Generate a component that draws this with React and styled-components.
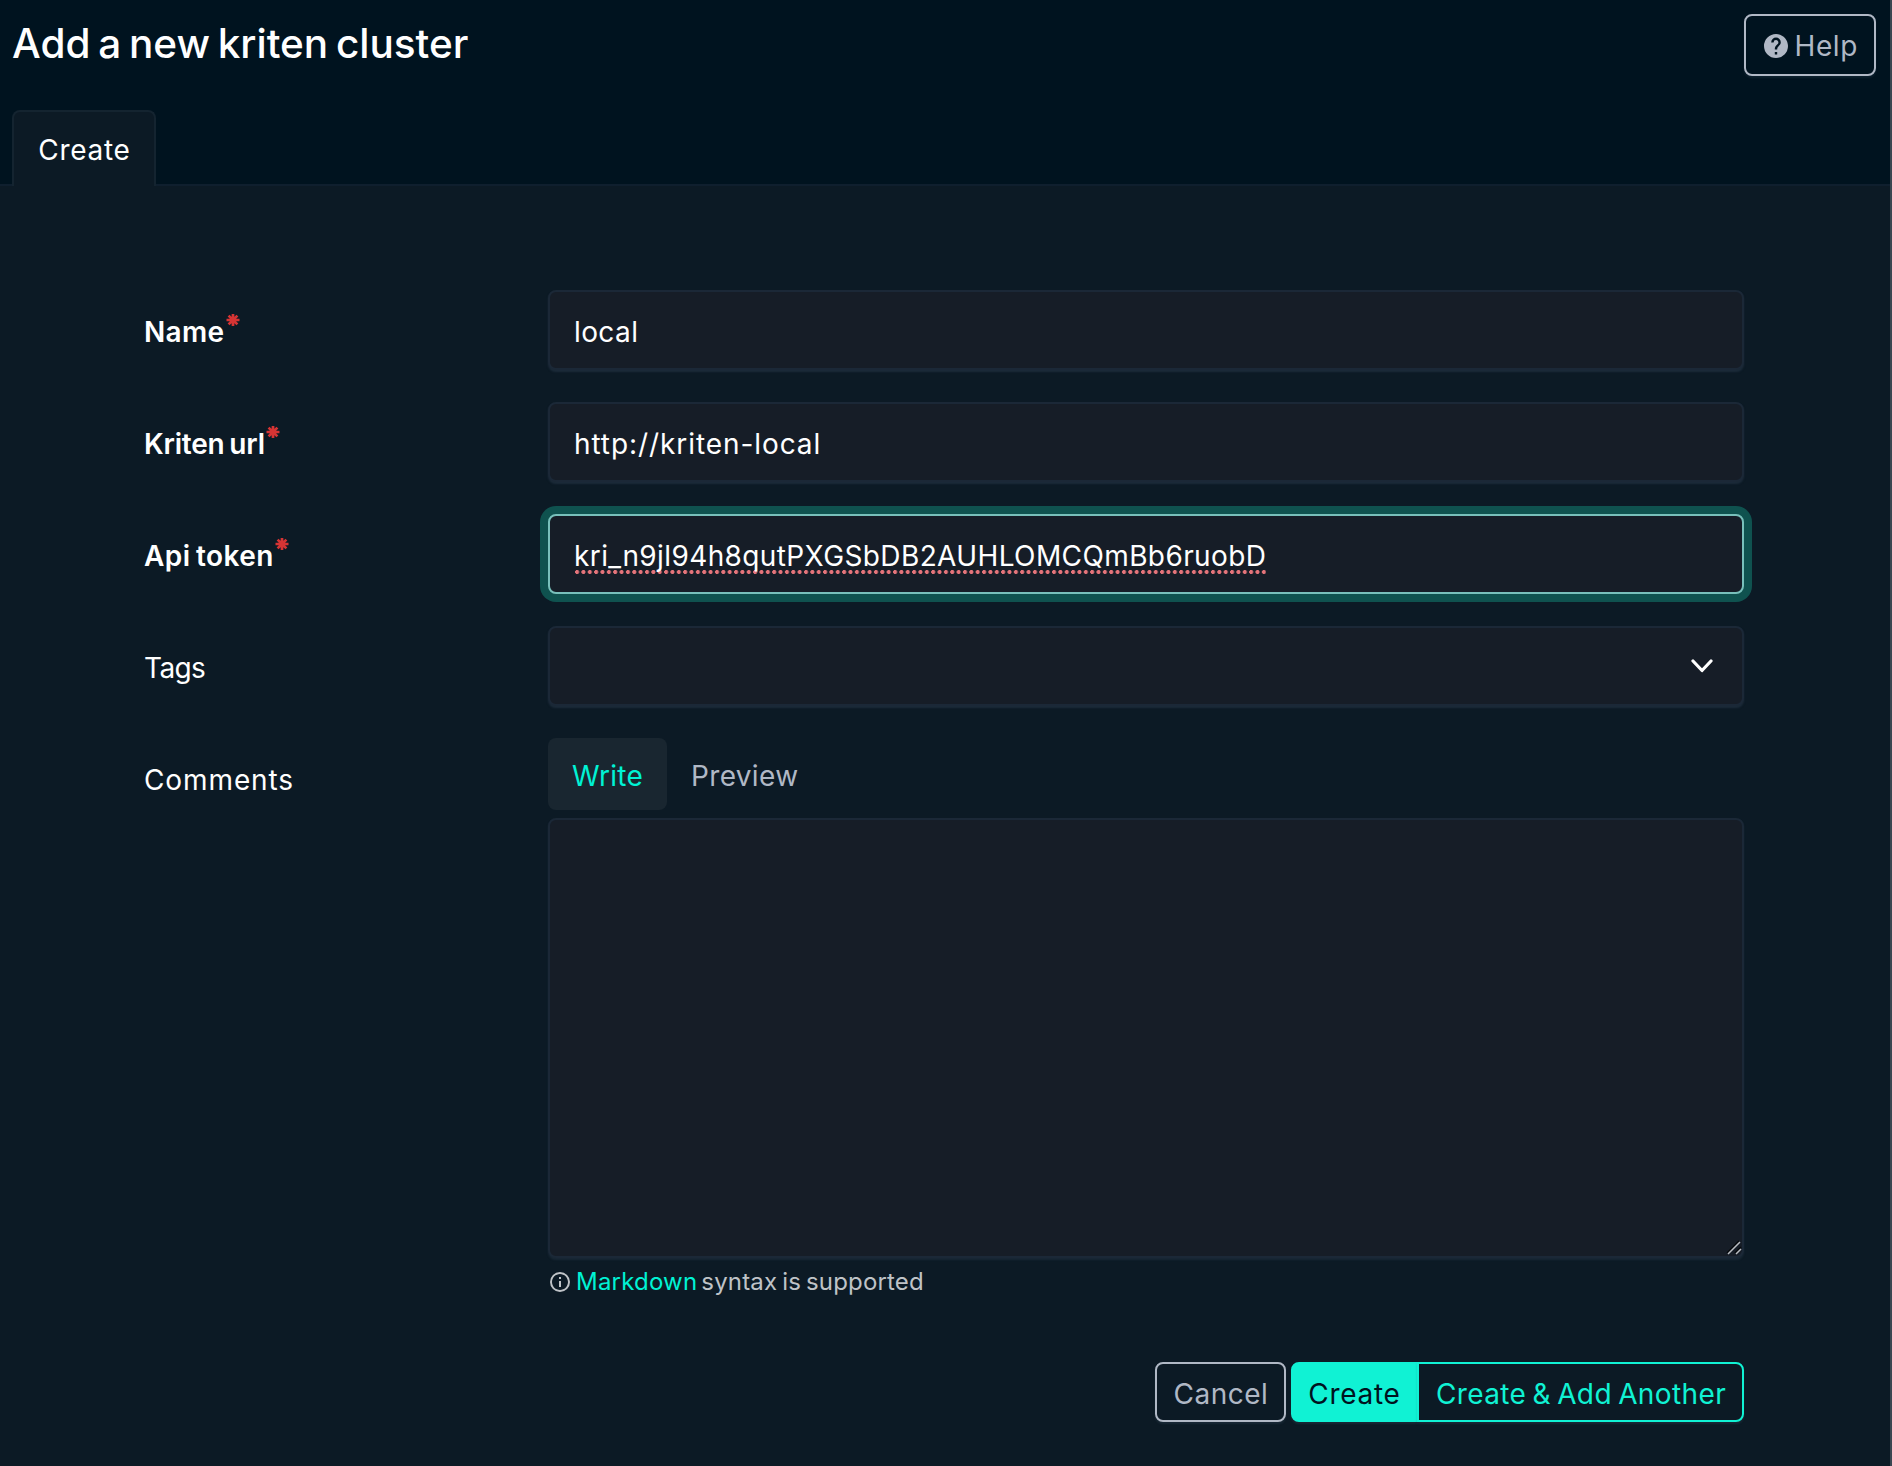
import React from "react";
import styled, { createGlobalStyle } from "styled-components";

const colors = {
  header: "#00131f",
  body: "#0c1a25",
  line: "#0f1f2e",
  tabLine: "#142430",
  field: "#161d27",
  fieldLine: "#1b2837",
  muted: "#b0b8c5",
  teal: "#00f2d4",
  required: "#d63434",
};

const GlobalStyle = createGlobalStyle`
  *, *::before, *::after { box-sizing: border-box; }
  body {
    margin: 0;
    background: ${colors.body};
    color: #fff;
    font-family: Inter, "Liberation Sans", sans-serif;
    font-size: 28px;
    line-height: 40px;
    word-spacing: -2px;
  }
`;

const Page = styled.div`
  min-height: 1466px;
  display: flex;
  flex-direction: column;
  border-right: 2px solid #3a4651;
`;

const Header = styled.header`
  height: 186px;
  flex: none;
  display: flex;
  flex-direction: column;
  justify-content: space-between;
  background: ${colors.header};
`;

const TitleBar = styled.div`
  display: flex;
  justify-content: space-between;
  align-items: flex-start;
  padding: 14px 14px 0 12px;
`;

const Title = styled.h1`
  margin: 0;
  font-size: 40.5px;
  line-height: 59px;
  font-weight: 500;
  letter-spacing: -0.02px;
  word-spacing: -3px;
`;

const Text = styled.span`
  letter-spacing: ${(p) => p.$spacing || 0}px;
  white-space: nowrap;
`;

const HelpButton = styled.button`
  display: flex;
  align-items: center;
  gap: 6.5px;
  width: 132px;
  height: 62px;
  padding: 1px 0 0 18px;
  border: 2px solid ${colors.muted};
  border-radius: 8px;
  background: transparent;
  color: ${colors.muted};
  font: inherit;
  box-shadow: 0 2px 2px rgba(60, 85, 105, 0.2);
`;

const TabList = styled.nav`
  display: flex;
  align-items: flex-end;
  height: 76px;
  padding-left: 12px;
  box-shadow: inset 0 -2px 0 ${colors.line};
`;

const Tab = styled.a`
  width: 144px;
  height: 76px;
  display: flex;
  justify-content: center;
  padding: 18px 0 0 1px;
  border: 2px solid ${colors.tabLine};
  border-bottom: 0;
  border-radius: 8px 8px 0 0;
  background: ${colors.body};
`;

const Form = styled.form`
  width: 1600px;
  margin-left: 144px;
  padding-top: 104px;
  display: flex;
  flex-direction: column;
  gap: 32px;
`;

const Row = styled.div`
  display: grid;
  grid-template-columns: 404px 1196px;
`;

const Label = styled.label`
  display: flex;
  align-items: flex-start;
  gap: 1.5px;
  padding-top: 22px;
  font-weight: ${(p) => (p.$required ? 600 : 400)};
`;

const Star = styled.svg`
  width: 14px;
  height: 14px;
  margin-top: 1px;
  stroke: ${colors.required};
  stroke-width: 2.7;
`;

const Field = styled.div`
  height: 80px;
  display: flex;
  align-items: center;
  justify-content: space-between;
  padding: 4px 29px 0 24px;
  border: 2px solid ${(p) => (p.$focused ? "#78c0bb" : colors.fieldLine)};
  border-radius: 8px;
  background: ${colors.field};
  box-shadow: ${(p) =>
    p.$focused ? "0 0 0 8px #0f524f" : "0 2px 2px rgba(43, 59, 77, 0.5)"};
`;

const Misspelled = styled(Text)`
  height: 40px;
  background: radial-gradient(circle at 2.1px 2px, #e5747a 1.7px, transparent 2.3px)
    1px 33.5px / 6.36px 4px repeat-x;
`;

const SelectField = styled(Field)`
  justify-content: flex-end;
  padding-top: 0;
`;

const Editor = styled.div`
  display: flex;
  flex-direction: column;
`;

const EditorTabs = styled.div`
  display: flex;
  margin-bottom: 8px;
`;

const EditorTab = styled.span`
  height: 72px;
  padding: 18px 0 0 24px;
  width: ${(p) => (p.$active ? 119 : 153)}px;
  border-radius: 8px;
  background: ${(p) => (p.$active ? "#192630" : "transparent")};
  color: ${(p) => (p.$active ? colors.teal : colors.muted)};
`;

const TextArea = styled.div`
  height: 440px;
  display: flex;
  align-items: flex-end;
  justify-content: flex-end;
  border: 2px solid ${colors.fieldLine};
  border-radius: 8px;
  background: ${colors.field};
  box-shadow: 0 2px 2px rgba(43, 59, 77, 0.4);
`;

const Hint = styled.p`
  display: flex;
  align-items: center;
  margin: 5px 0 0;
  padding-left: 2px;
  font-size: 24px;
  line-height: 37px;
  color: #bfc3c7;
`;

const Link = styled.a`
  margin: 0 4px 0 6px;
  color: ${colors.teal};
  letter-spacing: 0.2px;
`;

const Actions = styled.div`
  display: flex;
  justify-content: flex-end;
  gap: 5px;
  margin-top: 30px;
`;

const ButtonGroup = styled.div`
  display: flex;
`;

const Button = styled.button`
  width: ${(p) => p.$width}px;
  height: 60px;
  padding: 3px 0 0 1px;
  border: 2px solid ${(p) => p.$color};
  border-radius: ${(p) => p.$radius || "8px"};
  background: ${(p) => (p.$filled ? p.$color : "transparent")};
  color: ${(p) => (p.$filled ? colors.header : p.$color)};
  font: inherit;
  word-spacing: inherit;
  box-shadow: 0 2px 2px rgba(60, 85, 105, 0.25);
`;

const HelpIcon = () => (
  <svg width="24" height="24" viewBox="2 2 20 20" fill="currentColor">
    <path d="M15.07,11.25L14.17,12.17C13.45,12.89 13,13.5 13,15H11V14.5C11,13.39 11.45,12.39 12.17,11.67L13.41,10.41C13.78,10.05 14,9.55 14,9C14,7.89 13.1,7 12,7A2,2 0 0,0 10,9H8A4,4 0 0,1 12,5A4,4 0 0,1 16,9C16,9.88 15.64,10.67 15.07,11.25M13,19H11V17H13M12,2A10,10 0 0,0 2,12A10,10 0 0,0 12,22A10,10 0 0,0 22,12C22,6.47 17.5,2 12,2Z" />
  </svg>
);

const InfoIcon = () => (
  <svg width="20" height="20" viewBox="2 2 20 20" fill="currentColor">
    <path d="M11,9H13V7H11M12,20C7.59,20 4,16.41 4,12C4,7.59 7.59,4 12,4C16.41,4 20,7.59 20,12C20,16.41 16.41,20 12,20M12,2A10,10 0 0,0 2,12A10,10 0 0,0 12,22A10,10 0 0,0 22,12A10,10 0 0,0 12,2M11,17H13V11H11V17Z" />
  </svg>
);

const RequiredMark = () => (
  <Star viewBox="0 0 14 14">
    <path d="M7 1V13M0.5 7H13.5M2.6 2.6L11.4 11.4M11.4 2.6L2.6 11.4" />
  </Star>
);

const Chevron = () => (
  <svg width="22" height="14" viewBox="0 0 22 14" fill="none" stroke="#fff" strokeWidth="3.2" strokeLinecap="round" strokeLinejoin="round">
    <path d="M2 2L11 11.5L20 2" />
  </svg>
);

const ResizeGrip = () => (
  <svg width="18" height="18" viewBox="0 0 18 18" fill="none" strokeWidth="1.5">
    <path d="M3 15L15 3M11 15L17 9" stroke="#05080c" />
    <path d="M4 16L16 4M12 16L17 11" stroke="#b9bdc2" />
  </svg>
);

const inputs = [
  { label: "Name", labelSpacing: 0.3, value: "local", spacing: 0.4 },
  { label: "Kriten url", labelSpacing: -0.2, value: "http://kriten-local", spacing: 0.92 },
  {
    label: "Api token",
    labelSpacing: 0.45,
    value: "kri_n9jl94h8qutPXGSbDB2AUHLOMCQmBb6ruobD",
    spacing: 0.39,
    focused: true,
  },
];

export default function App() {
  return (
    <>
      <GlobalStyle />
      <Page>
        <Header>
          <TitleBar>
            <Title>Add a new kriten cluster</Title>
            <HelpButton type="button">
              <HelpIcon />
              <Text $spacing={0.6}>Help</Text>
            </HelpButton>
          </TitleBar>
          <TabList>
            <Tab>
              <Text $spacing={0.7}>Create</Text>
            </Tab>
          </TabList>
        </Header>
        <Form>
          {inputs.map((f) => (
            <Row key={f.label}>
              <Label $required>
                <Text $spacing={f.labelSpacing}>{f.label}</Text>
                <RequiredMark />
              </Label>
              <Field $focused={f.focused}>
                {f.focused ? (
                  <Misspelled $spacing={f.spacing}>{f.value}</Misspelled>
                ) : (
                  <Text $spacing={f.spacing}>{f.value}</Text>
                )}
              </Field>
            </Row>
          ))}
          <Row>
            <Label>
              <Text $spacing={-0.6}>Tags</Text>
            </Label>
            <SelectField>
              <Chevron />
            </SelectField>
          </Row>
          <Row>
            <Label>
              <Text $spacing={0.9}>Comments</Text>
            </Label>
            <Editor>
              <EditorTabs>
                <EditorTab $active>
                  <Text $spacing={0.3}>Write</Text>
                </EditorTab>
                <EditorTab>
                  <Text $spacing={0.35}>Preview</Text>
                </EditorTab>
              </EditorTabs>
              <TextArea>
                <ResizeGrip />
              </TextArea>
              <Hint>
                <InfoIcon />
                <Link>Markdown</Link>
                <Text $spacing={0.18}>syntax is supported</Text>
              </Hint>
            </Editor>
          </Row>
          <Actions>
            <Button type="button" $width={131} $color={colors.muted}>
              <Text $spacing={0.5}>Cancel</Text>
            </Button>
            <ButtonGroup>
              <Button type="button" $width={126} $color="#10f2d4" $filled $radius="8px 0 0 8px">
                <Text $spacing={0.7}>Create</Text>
              </Button>
              <Button type="button" $width={327} $color="#10f2d4" $radius="0 8px 8px 0">
                <Text $spacing={0.38}>Create &amp; Add Another</Text>
              </Button>
            </ButtonGroup>
          </Actions>
        </Form>
      </Page>
    </>
  );
}
